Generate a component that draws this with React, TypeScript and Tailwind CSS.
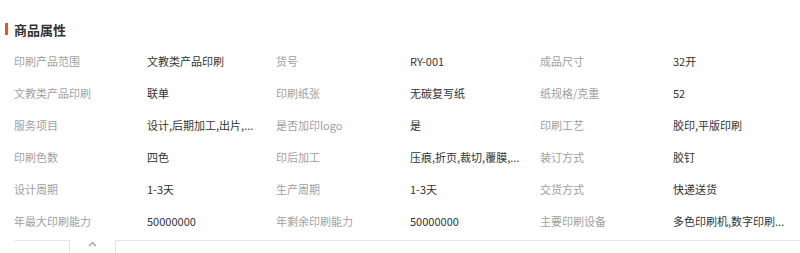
const rows: [string, string, string, string, string, string][] = [
  ["印刷产品范围", "文教类产品印刷", "货号", "RY-001", "成品尺寸", "32开"],
  ["文教类产品印刷", "联单", "印刷纸张", "无碳复写纸", "纸规格/克重", "52"],
  ["服务项目", "设计,后期加工,出片,...", "是否加印logo", "是", "印刷工艺", "胶印,平版印刷"],
  ["印刷色数", "四色", "印后加工", "压痕,折页,裁切,覆膜,...", "装订方式", "胶钉"],
  ["设计周期", "1-3天", "生产周期", "1-3天", "交货方式", "快递送货"],
  ["年最大印刷能力", "50000000", "年剩余印刷能力", "50000000", "主要印刷设备", "多色印刷机,数字印刷..."],
];

export default function App() {
  return (
    <div
      className="w-[800px] h-[253px] bg-white overflow-hidden text-[11px] text-[#333]"
      style={{ fontFamily: '"Noto Sans CJK SC", "Liberation Sans", sans-serif' }}
    >
      <div className="flex items-center h-[14px] mt-[22px] ml-[5px]">
        <span className="w-[3px] h-[12px] bg-[#f2501b]" />
        <h2 className="ml-[6px] text-[13px] font-bold text-[#333] leading-none">商品属性</h2>
      </div>

      <div className="mt-[9px] pl-[14px]">
        {rows.map((r) => (
          <div key={r[0]} className="flex items-center h-[32px] whitespace-nowrap">
            <div className="w-[133px] text-[#a0a0a0]">{r[0]}</div>
            <div className="w-[129px]">{r[1]}</div>
            <div className="w-[134px] text-[#a0a0a0]">{r[2]}</div>
            <div className="w-[130px]">{r[3]}</div>
            <div className="w-[133px] text-[#a0a0a0]">{r[4]}</div>
            <div className="flex-1">{r[5]}</div>
          </div>
        ))}
      </div>

      <div className="flex mt-[3px] h-[20px]">
        <div className="ml-[14px] w-[56px] border-t border-r border-[#e5e5e5]" />
        <div className="w-[45px] flex justify-center pt-[1px]">
          <svg width="9" height="6" viewBox="0 0 9 6" fill="none">
            <path d="M1 5l3.5-3.5L8 5" stroke="#999" strokeWidth="1.2" />
          </svg>
        </div>
        <div className="flex-1 border-t border-l border-[#e5e5e5]" />
      </div>
    </div>
  );
}
